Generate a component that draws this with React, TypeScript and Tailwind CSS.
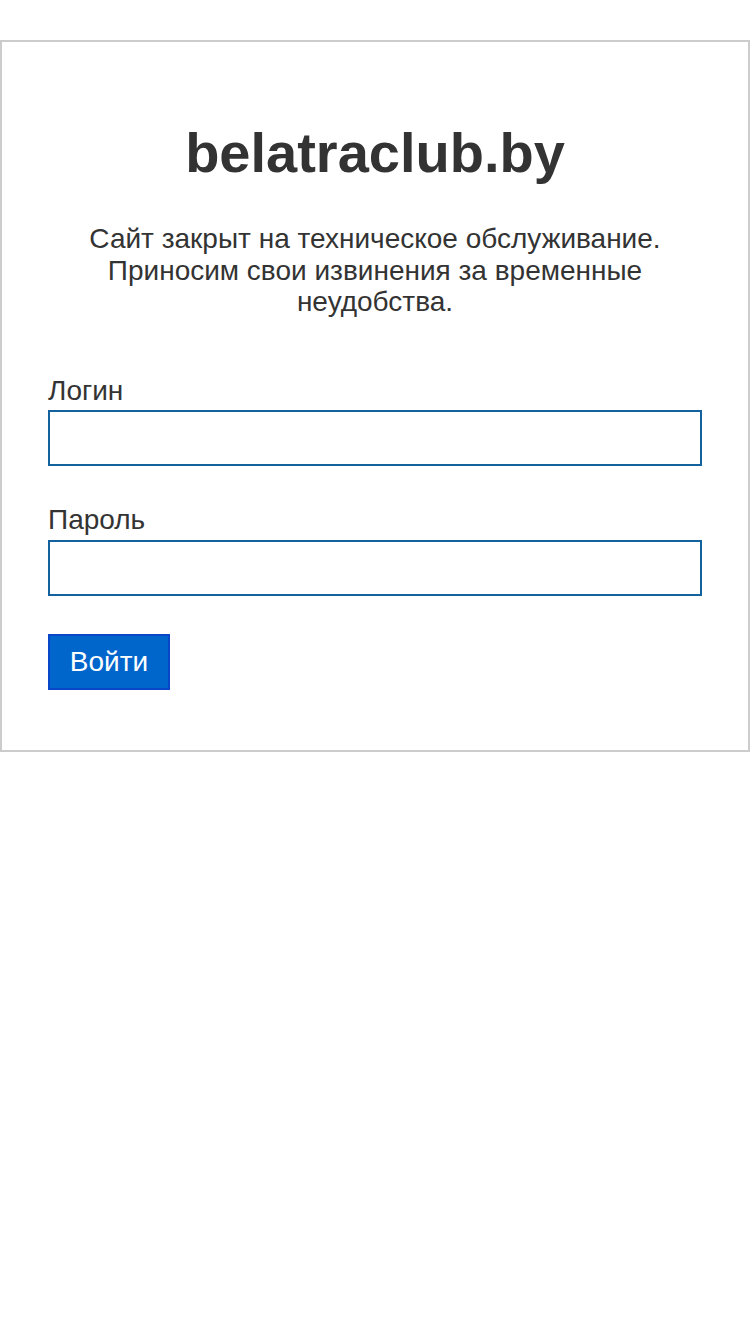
import React from 'react';

export default function App() {
    return (
        <div className="min-h-[1334px] bg-white pt-[40px] font-['Liberation_Sans',Arial,sans-serif] text-[#333]">
            <div className="border-2 border-[#cccccc] px-[46px] pt-[79px] pb-[60px]">
                <h1 className="text-center text-[56px] font-bold leading-[64px] text-[#333]">belatraclub.by</h1>
                <p className="mt-[38px] text-center text-[28px] leading-[31.5px]">
                    Сайт закрыт на техническое обслуживание. Приносим свои извинения за временные неудобства.
                </p>
                <form className="mt-[57px] flex flex-col" onSubmit={(e) => e.preventDefault()}>
                    <label className="text-[28px] leading-[31.5px]">Логин</label>
                    <input type="text" className="mt-[4px] h-[56px] w-full border-2 border-[#13629e] bg-white px-2 text-[28px] outline-none" />
                    <label className="mt-[38px] text-[28px] leading-[31.5px]">Пароль</label>
                    <input type="password" className="mt-[4px] h-[56px] w-full border-2 border-[#13629e] bg-white px-2 text-[28px] outline-none" />
                    <div className="mt-[38px]">
                        <button type="submit" className="h-[56px] w-[122px] border-2 border-[#0a47c8] bg-[#0066cc] text-[28px] leading-none text-white">
                            Войти
                        </button>
                    </div>
                </form>
            </div>
        </div>
    );
}
